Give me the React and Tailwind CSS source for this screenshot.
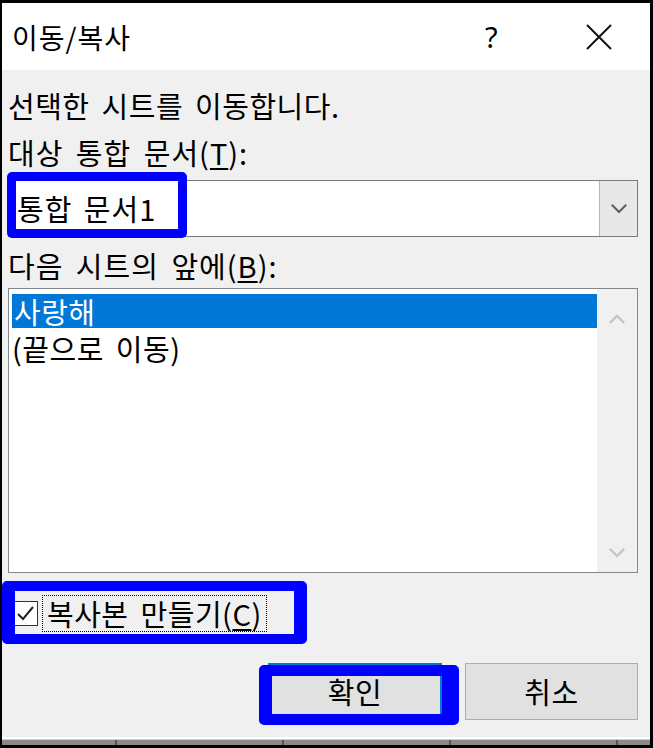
import React from "react";

const fontKr = "font-['Noto_Sans_CJK_KR','Noto_Sans',sans-serif]";

function TitleBar() {
  return (
    <div className="flex h-[67px] items-center bg-white pl-[10px]">
      <span className="text-[28px] leading-none tracking-[1px]">이동/복사</span>
      <span className="ml-auto mr-[88px] font-['Noto_Sans',sans-serif] text-[29px] leading-none">?</span>
      <svg width="26" height="26" viewBox="0 0 26 26" className="mr-[38px]">
        <path d="M1 1 L25 25 M25 1 L1 25" stroke="#111" strokeWidth="2" fill="none" />
      </svg>
    </div>
  );
}

function Chevron({ up, color = "#606060", size = 18 }) {
  return (
    <svg width={size} height={size * 0.6} viewBox="0 0 20 12">
      <path
        d={up ? "M2 10 L10 2 L18 10" : "M2 2 L10 10 L18 2"}
        stroke={color}
        strokeWidth="2.4"
        fill="none"
      />
    </svg>
  );
}

function ComboBox() {
  return (
    <div className="relative mt-[8px] flex h-[57px] border border-[#7a7a7a] bg-white">
      <div className="flex flex-1 items-center pl-[8px] leading-none tracking-[1px] [word-spacing:4px]">통합 문서1</div>
      <div className="flex w-[38px] items-center justify-center border-l border-[#b8b8b8] bg-[#e8e8e8]">
        <Chevron />
      </div>
      <div className="absolute left-[-2px] top-[-9px] h-[66px] w-[180px] rounded-[5px] border-[9px] border-[#0000ff]" />
    </div>
  );
}

function ListBox() {
  return (
    <div className="mt-[3px] flex h-[285px] border border-[#828790] bg-white">
      <div className="flex-1 pl-[3px] pt-[5px]">
        <div className="flex h-[34px] items-center bg-[#0078d7] pl-[2px] leading-none text-white">사랑해</div>
        <div className="flex h-[40px] items-center leading-none">(끝으로 이동)</div>
      </div>
      <div className="flex w-[40px] flex-col items-center justify-between bg-[#f0f0f0] pb-[14px] pt-[25px]">
        <Chevron up color="#c2c2c2" />
        <Chevron color="#c2c2c2" />
      </div>
    </div>
  );
}

function CopyCheck() {
  return (
    <div className="relative mt-[20px] flex h-[40px] items-center pl-[5px]">
      <div className="flex h-[25px] w-[25px] items-center justify-center border border-[#333] bg-white">
        <svg width="19" height="17" viewBox="0 0 19 17">
          <path d="M2 9 L7 14 L17 2" stroke="#222" strokeWidth="2" fill="none" />
        </svg>
      </div>
      <div className="ml-[4px] flex h-[37px] items-center border border-dotted border-black px-[4px] leading-none">
        복사본 만들기(<span className="underline underline-offset-[3px]">C</span>)
      </div>
      <div className="absolute left-[-6px] top-[-12px] h-[63px] w-[305px] rounded-[5px] border-y-[10px] border-x-[13px] border-[#0000ff]" />
    </div>
  );
}

function Buttons() {
  return (
    <div className="mt-[30px] flex justify-end gap-[23px]">
      <div className="relative">
        <button className="h-[57px] w-[174px] border-2 border-[#0078d7] bg-[#e1e1e1] leading-none">확인</button>
        <div className="absolute left-[-9px] top-[2px] h-[60px] w-[200px] rounded-[5px] border-y-[11px] border-l-[13px] border-r-[17px] border-[#0000ff]" />
      </div>
      <button className="h-[57px] w-[173px] border border-[#adadad] bg-[#e1e1e1] leading-none">취소</button>
    </div>
  );
}

function SheetEdge() {
  const ticks = [113, 281, 448, 615];
  return (
    <div className="flex flex-col">
      <div className="h-[2px] bg-white" />
      <div className="h-[1px] bg-[#d0d0d0]" />
      <div className="flex h-[5px] bg-[#8a8a8a]">
        {ticks.map((x, i) => (
          <div key={x} className="h-full w-[2px] bg-[#555]" style={{ marginLeft: i === 0 ? x : 165 }} />
        ))}
      </div>
    </div>
  );
}

export default function App() {
  return (
    <div className="h-[748px] w-[653px] bg-black pb-[3px] pl-[2px] pr-[3px] pt-[3px]">
      <div className={`flex h-full flex-col bg-[#f0f0f0] text-[29px] tracking-[0.5px] text-black [word-spacing:5px] ${fontKr}`}>
        <TitleBar />
        <div className="flex flex-1 flex-col pl-[6px] pr-[12px] pt-[15px]">
          <div className="leading-[40px]">선택한 시트를 이동합니다.</div>
          <div className="mt-[7px] leading-[40px] tracking-[1px]">
            대상 통합 문서(<span className="underline underline-offset-[3px]">T</span>):
          </div>
          <ComboBox />
          <div className="mt-[8px] leading-[40px] tracking-[1px]">
            다음 시트의 앞에(<span className="underline underline-offset-[3px]">B</span>):
          </div>
          <ListBox />
          <CopyCheck />
          <Buttons />
        </div>
        <SheetEdge />
      </div>
    </div>
  );
}
